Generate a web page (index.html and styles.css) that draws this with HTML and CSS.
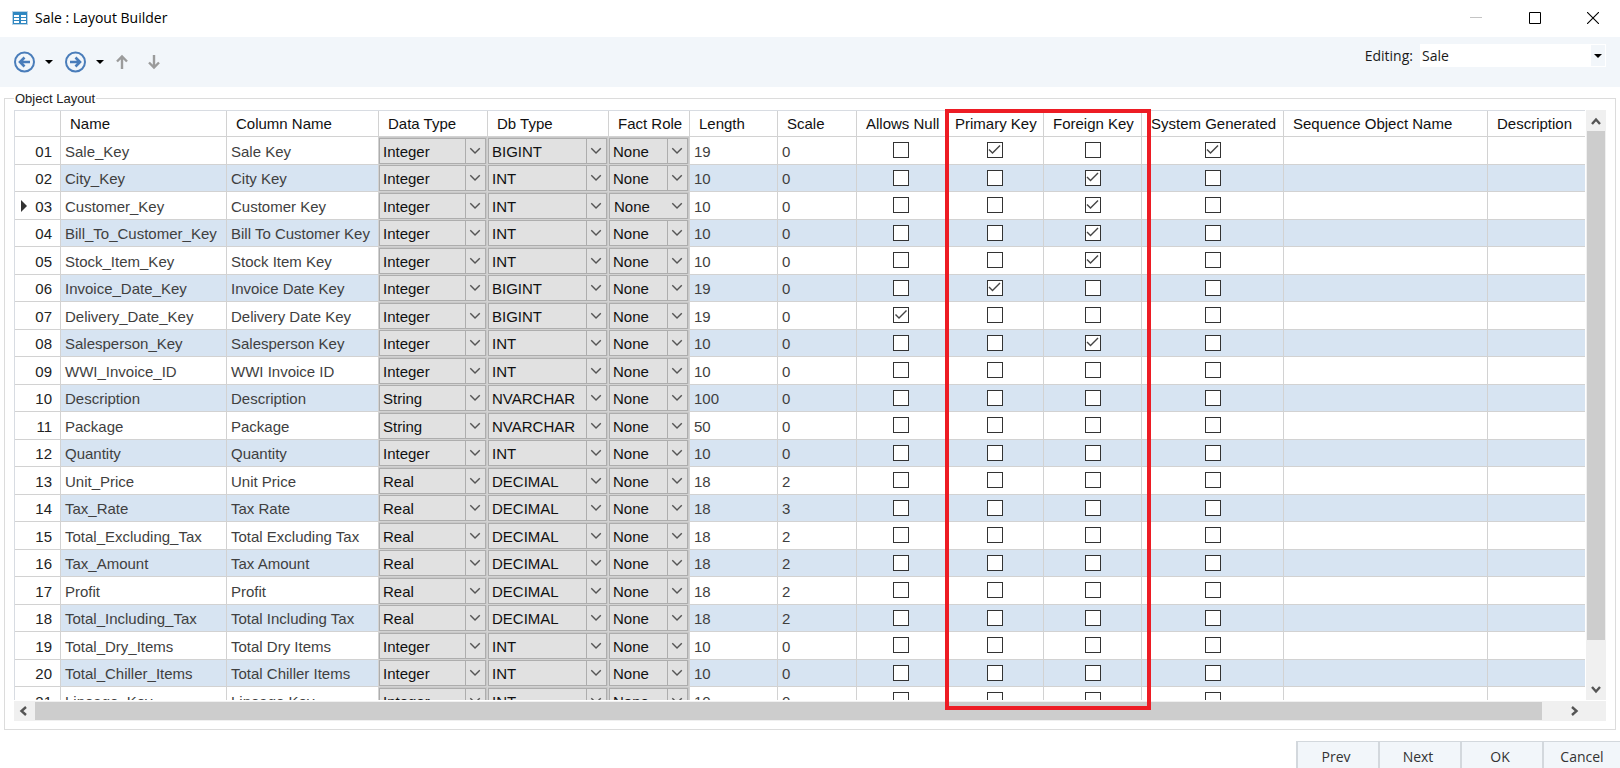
FILE: index.html
```html
<!DOCTYPE html>
<html lang="en">
<head>
    <meta charset="UTF-8">
    <meta name="viewport" content="width=device-width, initial-scale=1.0">
    <title>Sale : Layout Builder</title>
    <link rel="stylesheet" href="styles.css">
</head>
<body>
    <header class="title-bar">
        <svg class="app-icon" width="16" height="14" viewBox="0 0 16 14">
            <rect width="16" height="14" fill="#b9d3e6"/>
            <rect x="1" y="1" width="14" height="12" fill="#2f87c1"/>
            <path d="M2 4h5v2H2zM9 4h5v2H9zM2 7h5v2H2zM9 7h5v2H9zM2 10h5v2H2zM9 10h5v2H9z" fill="#fff"/>
        </svg>
        <h1>Sale : Layout Builder</h1>
        <div class="window-buttons">
            <button type="button" aria-label="Minimize" disabled>
                <svg width="12" height="12" viewBox="0 0 12 12"><path d="M0 5.5h12" stroke="#c4c4c4"/></svg>
            </button>
            <button type="button" aria-label="Maximize">
                <svg width="12" height="12" viewBox="0 0 12 12"><path d="M.5.5h11v11H.5z" fill="none" stroke="#000"/></svg>
            </button>
            <button type="button" aria-label="Close">
                <svg width="12" height="12" viewBox="0 0 12 12"><path d="M0 0l12 12M12 0L0 12" stroke="#000" stroke-width="1.1"/></svg>
            </button>
        </div>
    </header>

    <div class="toolbar">
        <div class="nav-buttons">
            <button type="button" class="nav-round" aria-label="Back">
                <svg width="22" height="22" viewBox="0 0 22 22" fill="none" stroke="#4a7dba">
                    <circle cx="10.500" cy="11" r="9.5" stroke-width="2"/>
                    <path d="M16 11H7M10.500 6.5L6 11l4.5 4.5" stroke-width="2.6"/>
                </svg>
            </button>
            <button type="button" class="nav-drop" aria-label="Back history"><span class="caret"></span></button>
            <button type="button" class="nav-round" aria-label="Forward">
                <svg width="22" height="22" viewBox="0 0 22 22" fill="none" stroke="#4a7dba">
                    <circle cx="10.500" cy="11" r="9.5" stroke-width="2"/>
                    <path d="M5 11h9M10.500 6.5L15 11l-4.500 4.5" stroke-width="2.6"/>
                </svg>
            </button>
            <button type="button" class="nav-drop" aria-label="Forward history"><span class="caret"></span></button>
            <button type="button" class="nav-arrow" aria-label="Move up">
                <svg width="12" height="16" viewBox="0 0 12 16" fill="none" stroke="#9b9b9b" stroke-width="2.4"><path d="M6 15V3M1 7.5l5-5 5 5"/></svg>
            </button>
            <button type="button" class="nav-arrow nav-down" aria-label="Move down">
                <svg width="12" height="16" viewBox="0 0 12 16" fill="none" stroke="#9b9b9b" stroke-width="2.4"><path d="M6 1v12M1 8.5l5 5 5-5"/></svg>
            </button>
        </div>
        <div class="editing">
            <label for="editing-object">Editing:</label>
            <div class="editing-box">
                <select id="editing-object"><option>Sale</option></select>
                <span class="editing-arrow"><span class="caret"></span></span>
            </div>
        </div>
    </div>

    <fieldset class="object-layout">
        <legend>Object Layout</legend>
        <div class="grid-area">
            <div class="grid-view">
                <table class="grid">
                    <colgroup>
                        <col class="w-index"><col class="w-name"><col class="w-column"><col class="w-data"><col class="w-db">
                        <col class="w-fact"><col class="w-length"><col class="w-scale"><col class="w-null"><col class="w-key">
                        <col class="w-key"><col class="w-system"><col class="w-sequence"><col>
                    </colgroup>
                    <thead>
                        <tr>
                            <th></th><th>Name</th><th>Column Name</th><th>Data Type</th><th>Db Type</th><th>Fact Role</th><th>Length</th>
                            <th>Scale</th><th>Allows Null</th><th>Primary Key</th><th>Foreign Key</th><th>System Generated</th>
                            <th>Sequence Object Name</th><th>Description</th>
                        </tr>
                    </thead>
                    <tbody id="grid-rows"></tbody>
                </table>
            </div>
            <div class="scroll-v">
                <svg class="scroll-arrow" width="20" height="21" viewBox="0 0 20 21"><path d="M6 14l4-4.500 4 4.500" fill="none" stroke="#555" stroke-width="2.4"/></svg>
                <div class="thumb-v"></div>
                <svg class="scroll-arrow" width="20" height="21" viewBox="0 0 20 21"><path d="M6 8l4 4.500 4-4.500" fill="none" stroke="#555" stroke-width="2.4"/></svg>
            </div>
            <div class="scroll-h">
                <svg class="scroll-arrow" width="21" height="20" viewBox="0 0 21 20"><path d="M12 6l-4.500 4 4.500 4" fill="none" stroke="#555" stroke-width="2.4"/></svg>
                <div class="thumb-h"></div>
                <svg class="scroll-arrow" width="21" height="20" viewBox="0 0 21 20"><path d="M8 6l4.500 4-4.500 4" fill="none" stroke="#555" stroke-width="2.4"/></svg>
            </div>
            <div class="key-highlight"></div>
        </div>
    </fieldset>

    <footer class="dialog-buttons">
        <button type="button">Prev</button>
        <button type="button">Next</button>
        <button type="button">OK</button>
        <button type="button">Cancel</button>
    </footer>

    <script src="script.js"></script>
</body>
</html>
```

FILE: styles.css
```css
* { box-sizing: border-box; }
body { font-family: "Liberation Sans", Arial, sans-serif; font-size: 15px; margin: 0; height: 100vh; display: flex; flex-direction: column; overflow: hidden; background-color: #fff; color: #1a1a1a; }
button, select, input { font: inherit; color: inherit; margin: 0; padding: 0; border: 0; border-radius: 0; background: none; }
svg { display: block; }

.title-bar { flex: none; height: 37px; display: flex; align-items: center; padding: 0 0 2px 12px; font-family: "Open Sans", "Noto Sans", sans-serif; }
.title-bar h1 { margin: 0 auto 0 7px; font-size: 14px; font-weight: 400; line-height: 20px; color: #000; }
.window-buttons { display: flex; }
.window-buttons button { width: 59px; height: 35px; display: flex; align-items: center; justify-content: center; }
.window-buttons button:last-child { width: 54px; margin-left: 2px; }

.toolbar { flex: none; height: 50px; display: flex; justify-content: space-between; background-color: #f2f6fa; padding: 0 14px; }
.nav-buttons { display: flex; align-items: center; }
.nav-round { width: 22px; height: 22px; }
.nav-drop { width: 29px; height: 22px; display: flex; align-items: center; justify-content: center; padding-right: 3px; }
.nav-down { margin-left: 20px; }
.caret { border: 4px solid transparent; border-top-color: #000; border-bottom: 0; }
.editing { display: flex; align-items: center; align-self: flex-start; margin-top: 7px; gap: 7px; font-family: "Open Sans", "Noto Sans", sans-serif; font-size: 14px; }
.editing-box { position: relative; width: 186px; height: 23px; background-color: #fff; }
.editing-box select { appearance: none; width: 100%; height: 22px; padding-left: 2px; }
.editing-arrow { position: absolute; top: 1px; right: 1px; width: 14px; height: 21px; display: flex; align-items: center; justify-content: center; background-color: #f2f6fa; pointer-events: none; }

.object-layout { flex: 1; min-width: 0; min-height: 0; display: flex; margin: 4px 4px 0; padding: 4px 9px 8px 9px; border: 1px solid #dcdcdc; }
.object-layout legend { font-size: 13px; line-height: 15px; padding: 0 1px; color: #222; }
.grid-area { position: relative; flex: 1; height: 100%; min-width: 0; display: grid; grid-template-columns: 1fr 21px; grid-template-rows: 1fr 21px; }
.grid-view { overflow: hidden; min-height: 0; border-top: 1px solid #d8dce2; border-left: 1px solid #d8dce2; }
.grid { width: 100%; table-layout: fixed; border-collapse: separate; border-spacing: 0; }
.w-index { width: 46px; }
.w-name { width: 166px; }
.w-column { width: 152px; }
.w-data { width: 109px; }
.w-db { width: 121px; }
.w-fact { width: 81px; }
.w-length { width: 88px; }
.w-scale { width: 79px; }
.w-null { width: 89px; }
.w-key { width: 98px; }
.w-system { width: 142px; }
.w-sequence { width: 204px; }

.grid th, .grid td { padding: 0; border-right: 1px solid #d2d2d2; border-bottom: 1px solid #d2d2d2; white-space: nowrap; overflow: hidden; }
.grid th:last-child, .grid td:last-child { border-right: 0; }
.grid th { height: 26px; padding-left: 9px; font-weight: 400; text-align: left; color: #111; }
.grid td { height: 28px; padding: 2px 0 0 4px; line-height: 20px; color: #3f3f3f; }
.grid tr:nth-child(even) td { height: 27px; background-color: #d7e4f2; }
.grid tr td.index, .grid tr:nth-child(even) td.index { position: relative; background-color: #fff; text-align: right; padding-right: 8px; color: #222; }
.index.current::before { content: ""; position: absolute; left: 6px; top: 8px; border: 6px solid transparent; border-left-color: #333; border-right: 0; }
.grid tr td.combo-cell { padding: 0; background-color: #c8c8c8; }
.combo { position: relative; margin-right: 1px; }
.combo select { display: block; appearance: none; width: 100%; height: 26px; padding: 2px 0 0 3px; border: 1px solid #adadad; background-color: #e1e1e1; color: #111; }
.combo svg { position: absolute; top: 1px; right: 1px; height: 24px; width: 20px; border-left: 1px solid #adadad; pointer-events: none; }
.combo.active svg { border-left-color: transparent; }
.combo.active select { padding: 3px 0 0 4px; }
.grid tr td.check-cell { padding: 0 0 1px; text-align: center; }
.check-cell input { appearance: none; display: block; width: 16px; height: 16px; margin: 0 auto; border: 1px solid #333; background-color: #fff; }
.check-cell input:checked::before { content: ""; display: block; width: 14px; height: 14px; background-color: #444; clip-path: polygon(1px 7px, 2px 6px, 5px 9px, 12px 2px, 13px 3px, 5px 11px); }

.scroll-v { display: flex; flex-direction: column; background-color: #f0f0f0; border-left: 1px solid #fff; }
.scroll-h { grid-column: 1 / 3; display: flex; justify-content: space-between; background-color: #f0f0f0; padding-right: 21px; border-top: 1px solid #fff; }
.scroll-arrow { flex: none; }
.thumb-v { flex: 0 1 509px; margin: 0 1px; background-color: #cdcdcd; }
.scroll-v .scroll-arrow:last-child { margin-top: auto; }
.thumb-h { flex: 1; margin: 1px 22px 1px 0; background-color: #cdcdcd; }
/* outline round the Primary Key and Foreign Key columns */
.key-highlight { position: absolute; left: 931px; top: -1px; bottom: 11px; width: 206px; border: 4px solid #ed1c24; pointer-events: none; }

.dialog-buttons { flex: none; height: 38px; padding-top: 11px; display: flex; justify-content: flex-end; margin-right: -4px; font-family: "Open Sans", "Noto Sans", sans-serif; font-size: 14px; }
.dialog-buttons button { width: 82px; height: 30px; padding-right: 4px; border: 1px solid #d3d8dd; border-right-width: 0; border-left-width: 2px; background-color: #f2f6fa; color: #333; }
```

FILE: script.js
```js
const checkNames = ['Allows Null', 'Primary Key', 'Foreign Key', 'System Generated'];
const dataTypes = ['Integer', 'String', 'Real'];
const dbTypes = ['BIGINT', 'INT', 'NVARCHAR', 'DECIMAL'];

// name, data type, db type, length, scale, checked columns
const rows = [
    ['Sale_Key', 'Integer', 'BIGINT', 19, 0, [1, 3]],
    ['City_Key', 'Integer', 'INT', 10, 0, [2]],
    ['Customer_Key', 'Integer', 'INT', 10, 0, [2]],
    ['Bill_To_Customer_Key', 'Integer', 'INT', 10, 0, [2]],
    ['Stock_Item_Key', 'Integer', 'INT', 10, 0, [2]],
    ['Invoice_Date_Key', 'Integer', 'BIGINT', 19, 0, [1]],
    ['Delivery_Date_Key', 'Integer', 'BIGINT', 19, 0, [0]],
    ['Salesperson_Key', 'Integer', 'INT', 10, 0, [2]],
    ['WWI_Invoice_ID', 'Integer', 'INT', 10, 0, []],
    ['Description', 'String', 'NVARCHAR', 100, 0, []],
    ['Package', 'String', 'NVARCHAR', 50, 0, []],
    ['Quantity', 'Integer', 'INT', 10, 0, []],
    ['Unit_Price', 'Real', 'DECIMAL', 18, 2, []],
    ['Tax_Rate', 'Real', 'DECIMAL', 18, 3, []],
    ['Total_Excluding_Tax', 'Real', 'DECIMAL', 18, 2, []],
    ['Tax_Amount', 'Real', 'DECIMAL', 18, 2, []],
    ['Profit', 'Real', 'DECIMAL', 18, 2, []],
    ['Total_Including_Tax', 'Real', 'DECIMAL', 18, 2, []],
    ['Total_Dry_Items', 'Integer', 'INT', 10, 0, []],
    ['Total_Chiller_Items', 'Integer', 'INT', 10, 0, []],
    ['Lineage_Key', 'Integer', 'INT', 10, 0, []]
];
const currentRow = 2;

function combo(options, value, label, active) {
    const items = options.map(o => `<option${o === value ? ' selected' : ''}>${o}</option>`).join('');
    return `<td class="combo-cell"><div class="combo${active ? ' active' : ''}">
        <select aria-label="${label}">${items}</select>
        <svg viewBox="0 0 20 24"><path d="M4.500 9l5 5 5-5" fill="none" stroke="#555" stroke-width="1.5"/></svg>
    </div></td>`;
}

document.getElementById('grid-rows').innerHTML = rows.map((row, i) => {
    const [name, dataType, dbType, length, scale, checked] = row;
    const current = i === currentRow;
    const checks = checkNames.map((label, c) =>
        `<td class="check-cell"><input type="checkbox" aria-label="${name} ${label}"${checked.includes(c) ? ' checked' : ''}></td>`
    ).join('');
    return `<tr>
        <td class="index${current ? ' current' : ''}">${String(i + 1).padStart(2, '0')}</td>
        <td>${name}</td>
        <td>${name.replaceAll('_', ' ')}</td>
        ${combo(dataTypes, dataType, name + ' Data Type')}
        ${combo(dbTypes, dbType, name + ' Db Type')}
        ${combo(['None'], 'None', name + ' Fact Role', current)}
        <td>${length}</td>
        <td>${scale}</td>
        ${checks}
        <td></td>
        <td></td>
    </tr>`;
}).join('');
```
